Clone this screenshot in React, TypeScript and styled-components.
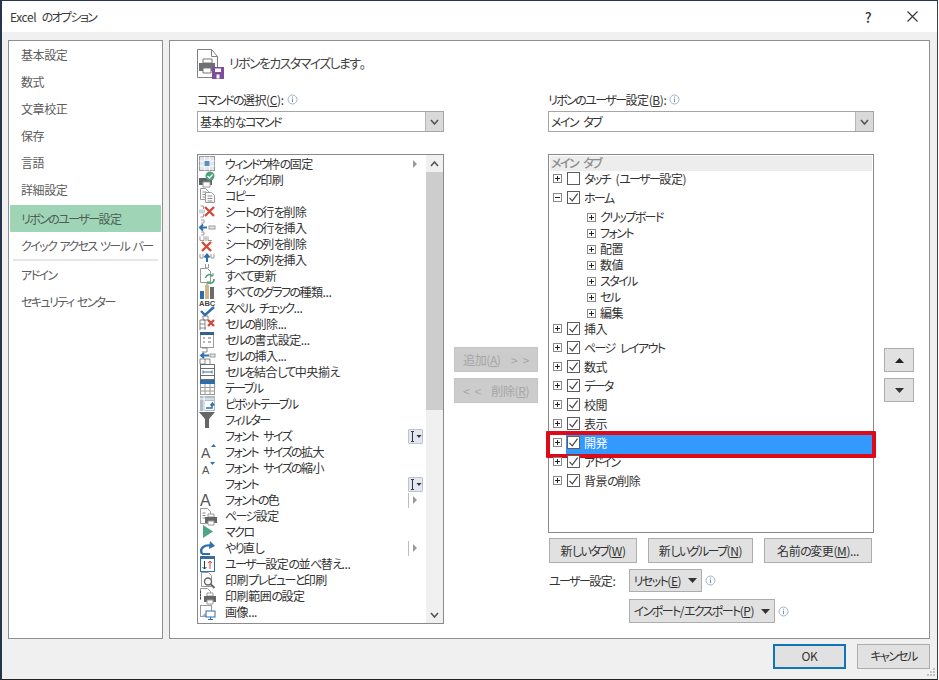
import React from "react";
import styled, { createGlobalStyle } from "styled-components";

const Global = createGlobalStyle`
  html, body { margin: 0; padding: 0; background: #fff; }
  body { font-family: "Noto Sans CJK JP", "Noto Sans", sans-serif; font-size: 12px; line-height: 16px; color: #333; font-feature-settings: "palt"; letter-spacing: -0.4px; word-spacing: 3px; }
  * { box-sizing: border-box; }
`;

const Window = styled.div`
  width: 938px; height: 680px; display: flex; flex-direction: column; position: relative; overflow: hidden;
  background: #f0f0f0; border: 1px solid #26354d; border-left-width: 2px; border-right-color: #3a3f48; border-bottom-color: #222;
`;
const TitleBar = styled.div`
  height: 31px; flex: none; background: #fff; display: flex; align-items: center; padding: 0 3px 0 8px; color: #3a3a3a;
`;
const TitleText = styled.div`flex: 1; font-size: 12px;`;
const TitleBtn = styled.div`
  width: 44px; height: 31px; display: flex; align-items: center; justify-content: center; color: #333; font-size: 14px; font-weight: 500;
`;
const Body = styled.div`flex: 1; display: flex; gap: 6px; padding: 8px 7px 0 6px; min-height: 0;`;
const Nav = styled.nav`
  width: 155px; height: 599px; flex: none; background: #fff; border: 1px solid #8f8f8f; padding: 0 1px 0; word-spacing: 1px;
`;
const NavItem = styled.div<{ $active?: boolean }>`
  height: 27px; display: flex; align-items: center; padding-left: 11px; color: #5c5c5c; font-size: 12px; white-space: pre;
  ${(p) => p.$active ? "background:#9fd4b6; border-radius:1px; margin-top:2px; color:#4d5f55;" : ""}
`;
const NavSep = styled.div`height: 2px; background: #e6e6e6; margin: 0 3px 0 3px;`;
const Panel = styled.main`
  flex: 1; height: 599px; background: #fff; border: 1px solid #8f8f8f; padding: 8px 0 0 27px;
`;
const Heading = styled.div`height: 30px; display: flex; align-items: center; gap: 4px; color: #444; font-size: 13px; margin-bottom: 13px;`;
const HeadingText = styled.span`margin-top: -2px;`;
const Columns = styled.div`display: grid; grid-template-columns: 247px 84px 326px 30px; column-gap: 10px; align-items: start;`;
const Col = styled.div`display: flex; flex-direction: column;`;
const Label = styled.div`height: 16px; display: flex; align-items: center; gap: 3px; margin-bottom: 3px; color: #333; padding-bottom: 1px;`;
const Select = styled.div`
  height: 21px; display: flex; align-items: center; border: 1px solid #a6a6a6; padding-left: 2px; margin-bottom: 22px; color: #333;
`;
const SelectText = styled.div`flex: 1;`;
const SelectBtn = styled.div`
  width: 18px; height: 19px; background: #d9d9d9; border-left: 1px solid #b5b5b5; display: flex; align-items: center; justify-content: center;
`;
const ListBox = styled.div`height: 470px; border: 1px solid #8a8a8a; display: flex; background: #fff;`;
const ListItems = styled.div`flex: 1; padding: 1px 0 0 1px; min-width: 0;`;
const Row = styled.div`height: 16px; display: flex; align-items: center; color: #333; white-space: nowrap;`;
const IconSlot = styled.div`width: 26px; height: 16px; flex: none; display: flex; align-items: flex-start;`;
const IconSvg = styled.svg`overflow: visible; flex: none;`;
const RowText = styled.div`flex: 1;`;
const Trail = styled.div`width: 18px; height: 16px; flex: none; display: flex; align-items: center;`;
const Combo = styled.div`
  width: 15px; height: 15px; border: 1px solid #b9c2d6; background: #e3e7f0; border-radius: 1px; display: flex; align-items: center; justify-content: center; gap: 1px;
`;
const SplitBar = styled.div`width: 1px; height: 15px; background: #bdbdbd; margin-right: 4px;`;
const Tri = styled.div`width: 0; height: 0; border-left: 4px solid #9a9a9a; border-top: 4px solid transparent; border-bottom: 4px solid transparent;`;
const TriRow = styled.div`margin-left: 5px;`;
const ScrollBar = styled.div`width: 17px; flex: none; background: #f0f0f0; display: flex; flex-direction: column;`;
const ScrollBtn = styled.div`height: 17px; flex: none; display: flex; align-items: center; justify-content: center;`;
const Thumb = styled.div`height: 238px; background: #cdcdcd;`;
const ScrollRest = styled.div`flex: 1;`;
const Mid = styled.div`display: flex; flex-direction: column; gap: 6px; padding-top: 255px;`;
const ArrowCol = styled.div`display: flex; flex-direction: column; gap: 6px; padding-top: 256px;`;
const Btn = styled.div<{ $disabled?: boolean; $primary?: boolean; $w?: number; $h?: number }>`
  width: ${(p) => (p.$w ? p.$w + "px" : "100%")}; height: ${(p) => p.$h ?? 25}px; flex: none; display: flex; align-items: center; justify-content: center; gap: 7px; white-space: nowrap;
  background: ${(p) => (p.$disabled ? "#cccccc" : "#e1e1e1")}; color: ${(p) => (p.$disabled ? "#a6a6a6" : "#333")};
  border: ${(p) => (p.$primary ? "2px solid #0f74b8" : p.$disabled ? "1px solid #c4c4c4" : "1px solid #adadad")};
`;
const Tree = styled.div`height: 379px; border: 1px solid #8a8a8a; padding: 1px; background: #fff;`;
const TreeHead = styled.div`height: 15px; line-height: 12px; margin-bottom: -2px; background: #ededed; color: #8c8c8c; display: flex; align-items: center; padding: 0 0 2px 1px; font-weight: 500;`;
const TreeRow = styled.div<{ $selected?: boolean }>`
  height: 19px; display: flex; align-items: center; color: #333; padding-left: 3px; position: relative; white-space: nowrap;
  ${(p) => p.$selected ? `z-index: 1; color: #fff;
    &::before { content: ""; position: absolute; left: 16px; right: 0; top: 2px; bottom: -4px; background: #3399ff; }
    &::after { content: ""; position: absolute; left: -4px; right: -4px; top: -2px; bottom: -6px; border: 4px solid #df0a17; border-radius: 1px; }
  ` : ""}
`;
const Exp = styled.div`
  width: 9px; height: 9px; flex: none; border: 1px solid #8a8a8a; position: relative; background: #fff; z-index: 1;
`;
const ExpH = styled.div`position: absolute; left: 1px; right: 1px; top: 3px; height: 1px; background: #222;`;
const ExpV = styled.div`position: absolute; top: 1px; bottom: 1px; left: 3px; width: 1px; background: #222;`;
const Check = styled.div`
  width: 13px; height: 13px; flex: none; border: 1px solid #5c5c5c; background: #fff; margin: 0 4px 0 5px; display: flex; align-items: center; justify-content: center; position: relative; z-index: 1;
`;
const TreeText = styled.span`position: relative; z-index: 1;`;
const SubGroup = styled.div`margin: 2px 0 -2px;`;
const SubRow = styled.div`height: 16px; display: flex; align-items: center; padding-left: 37px; gap: 4px; color: #333; white-space: nowrap;`;
const BtnRow = styled.div`display: flex; margin: 5px 0 0 1px; gap: 11px;`;
const SettingRow = styled.div`display: flex; align-items: center; margin-top: 6px; height: 23px;`;
const SettingLabel = styled.div`width: 81px; padding-left: 1px; color: #333;`;
const SettingRow2 = styled(SettingRow)`margin-top: 7px; height: 24px;`;
const InfoWrap = styled.div`margin-left: 3px; display: flex;`;
const Footer = styled.footer`height: 41px; flex: none; display: flex; justify-content: flex-end; align-items: center; gap: 11px; padding: 0 7px 5px 0; position: relative;`;
const Grip = styled.div`position: absolute; right: 1px; bottom: 1px; width: 12px; height: 12px; display: flex;`;
const Kana = styled.span`letter-spacing: -1.6px;`;

const Jp = ({ children }: { children: string }) => (
  <>{children.split(/([\u3040-\u30ff]+)/).map((s, i) => (i % 2 ? <Kana key={i}>{s}</Kana> : s))}</>
);

const Info = () => (
  <svg width="11" height="11" viewBox="0 0 11 11"><circle cx="5.5" cy="5.5" r="4.5" fill="none" stroke="#9db5cc" /><path d="M5.5 2.6v1M5.5 4.6v3.6" stroke="#6f93b5" /></svg>
);
const Chevron = ({ up }: { up?: boolean }) => (
  <svg width="9" height="6" viewBox="0 0 9 6"><path d={up ? "M1 5l3.5-4L8 5" : "M1 1l3.5 4L8 1"} fill="none" stroke="#555" strokeWidth="1.6" /></svg>
);
const Down = () => (<svg width="9" height="5" viewBox="0 0 9 5"><path d="M0 0h9L4.5 5z" fill="#333" /></svg>);
const Up = () => (<svg width="9" height="5" viewBox="0 0 9 5"><path d="M0 5h9L4.5 0z" fill="#222" /></svg>);
const CheckMark = () => (<svg width="11" height="11" viewBox="0 0 11 11"><path d="M1.5 5.8l2.8 3L9.6 1.6" fill="none" stroke="#444" strokeWidth="1.2" /></svg>);
const IBeam = () => (<svg width="13" height="13" viewBox="0 0 13 13"><path d="M2 1.5h1.500M5 1.500H3.500v10H5M2 11.500h1.500" fill="none" stroke="#333" /><path d="M7.500 5h5L10 8z" fill="#333" /></svg>);

const G = "#6d6d6d", L = "#9a9a9a", B = "#2f6fb0", R = "#d24a3c", T = "#5b8fc0";
const printer = (x: number, y: number, c = "#5f6468") => (
  <g transform={`translate(${x} ${y})`}><path d="M3 0h6v3H3z" fill="#fff" stroke={L} /><path d="M0 3h12v6H0z" fill={c} /><path d="M3 7h6v4H3z" fill="#fff" stroke={L} /></g>
);
const doc = (x = 2.5, y = .5, w = 9, h = 14) => <path d={`M${x} ${y}h${w - 3}l3 3v${h - 3}h-${w}z`} fill="#fff" stroke={L} />;
const lines = (x: number, y: number, n: number, w = 5) => (
  <path d={Array.from({ length: n }, (_, i) => `M${x} ${y + i * 2.5}h${w}`).join("")} stroke="#8a8a8a" />
);
const X = (x: number, y: number, s = 8) => <path d={`M${x} ${y}l${s} ${s}M${x + s} ${y}l-${s} ${s}`} stroke={R} strokeWidth="2.4" />;

const icons: Record<string, React.ReactNode> = {
  freeze: <><rect x=".5" y=".5" width="15" height="14" fill="#dfe6ee" stroke={L} /><path d="M5.500.5v14M10.500.5v14M.5 5h15M.5 10h15" stroke="#fff" /><rect x="5.500" y="5" width="5" height="5" fill={T} /></>,
  quick: <><rect x="0" y="6" width="13" height="7" fill="#5f6468" /><path d="M4 10h7v5H4z" fill="#fff" stroke={L} /><circle cx="11" cy="4" r="4.500" fill="#4fa078" /><path d="M8.500 4l2 2L13.500 2.500" stroke="#fff" fill="none" strokeWidth="1.200" /></>,
  copy: <>{doc(1.5, .5, 8, 11)}{lines(3.5, 4, 3, 4)}{doc(6.5, 4.5, 9, 10)}{lines(8.5, 8, 3)}</>,
  delrow: <><path d="M1.500 2h3v3M1.500 13h3v-3" fill="none" stroke={L} /><rect x="0" y="5.500" width="6" height="4" fill="#c8d8e6" />{X(6, 3, 9)}</>,
  insrow: <><path d="M2 0h3v3H2M2 12h3v3H2" fill="none" stroke={L} /><path d="M1 7.500h7M4 4.500l-3 3 3 3" stroke={B} strokeWidth="2" fill="none" /><rect x="10" y="6" width="6" height="3" fill="#e8e8e8" stroke={L} /></>,
  delcol: <><path d="M1 .5v4h4v-4M9 .5v4h4M7 0v5" fill="none" stroke={L} />{X(3, 6, 9)}</>,
  inscol: <><path d="M1 2v4h3V2M12 2v4h3V2M6.500 12v4h3v-4" fill="none" stroke={L} /><path d="M8 10V3M5.500 5.500L8 2.500l2.500 3" stroke={B} strokeWidth="2" fill="none" /></>,
  refresh: <>{doc(1.5, .5, 10, 14)}<path d="M6.500 10a4 4 0 0 1 7-2M15 11a4 4 0 0 1-7 3" fill="none" stroke="#4fa078" strokeWidth="1.600" /><path d="M14 5v3h-3M8 17v-3h3" fill="none" stroke="#4fa078" /></>,
  chart: <><rect x="1" y="7" width="4" height="8" fill="#2e6da8" /><rect x="6" y="1" width="4" height="14" fill="#d3b58a" /><rect x="11" y="3" width="4" height="12" fill="#6b6b6b" /></>,
  abc: <><text x="0" y="6" fontSize="7.500" fontWeight="700" fill="#444" letterSpacing="0" fontFamily="Liberation Sans, sans-serif">ABC</text><path d="M2 11l4 4 9-8" fill="none" stroke={B} strokeWidth="2.400" /></>,
  delcell: <><path d="M4 0h5v4H4zM1 4h5v4H1zM1 12h6M1 8v6M6 8v6" fill="none" stroke={G} strokeWidth=".8" />{X(9, 4, 6)}</>,
  format: <><rect x="1.500" y=".5" width="13" height="15" fill="#fff" stroke={L} /><rect x="1" y="0" width="14" height="3" fill="#355f8c" /><path d="M4 6h2M4 10h2M9 6h3M9 10h3" stroke="#666" /></>,
  inscell: <><path d="M3 0h5v4H3M1 11h5v5H1zM6 11h5v5" fill="none" stroke={G} strokeWidth=".8" /><path d="M2 7.500h8M5 5L2 7.500 5 10" stroke={B} strokeWidth="1.800" fill="none" /><rect x="11" y="6" width="5" height="3" fill="#e8e8e8" stroke={L} /></>,
  merge: <><rect x="1.500" y=".5" width="14" height="15" fill="#fff" stroke={G} /><path d="M1.500 4.500h14M1.500 11.500h14" stroke={G} /><path d="M4 8h9M4 6.500v3M13 6.500v3" stroke={B} /></>,
  table: <><rect x="1.500" y=".5" width="14" height="14" fill="#fff" stroke={L} /><rect x="1" y="0" width="15" height="4" fill="#2e6da8" /><path d="M6 4v10M11 4v10M1.500 7.500h14M1.500 11h14" stroke={L} /></>,
  pivot: <><rect x="1" y="0" width="15" height="15" fill="#aebccb" /><rect x="6" y="5" width="9" height="9" fill="#fff" /><path d="M7 12h6V8M11.500 9.500L13.500 7 15 9.500" fill="none" stroke={B} strokeWidth="1.500" /><path d="M1 3h14M5 0v15" stroke="#fff" /></>,
  filter: <path d="M0 0h16L10 7v9H6V7z" fill="#666" />,
  aup: <><text x="2" y="14" fontSize="14" fill="#555" fontFamily="Liberation Sans, sans-serif">A</text><path d="M12 3h5l-2.500-3z" fill={B} /></>,
  adown: <><text x="3" y="14" fontSize="11" fill="#555" fontFamily="Liberation Sans, sans-serif">A</text><path d="M11 2h5l-2.500 3z" fill={B} /></>,
  a: <text x="1" y="14" fontSize="16" fill="#555" fontFamily="Liberation Sans, sans-serif">A</text>,
  page: <>{doc(1.5, .5, 10, 15)}{lines(3.500, 5, 3, 3)}{printer(6, 6, "#666")}</>,
  macro: <path d="M4 1l10 6.500L4 14z" fill="#4ea583" />,
  redo: <><path d="M3 14c-3-6 3-10 10-8" fill="none" stroke={B} strokeWidth="2.400" /><path d="M11 1l5 5-6 3z" fill={B} /><path d="M3 14h8" stroke={B} strokeWidth="2" /></>,
  sort: <><rect x="1.500" y=".5" width="14" height="15" fill="#fff" stroke={B} /><rect x="1" y="0" width="15" height="3" fill="#3a6d9e" /><path d="M5.500 5v8M3.500 11l2 2 2-2" fill="none" stroke="#333" /><path d="M11 13V5M9 7l2-2 2 2" fill="none" stroke={R} /></>,
  preview: <>{doc(2.5, .5, 10, 14)}<circle cx="9" cy="9.500" r="3.500" fill="#fff" stroke="#666" strokeWidth="1.400" /><path d="M11.500 12l4 4" stroke="#666" strokeWidth="2" /></>,
  area: <><path d="M1.500 12V.5h7l3 3V6" fill="#fff" stroke={L} /><path d="M1.500 3v8" stroke="#444" strokeDasharray="2 1" />{printer(5, 5, "#666")}</>,
  picture: <><rect x="1.500" y="1.500" width="11" height="11" fill="#fff" stroke={L} /><path d="M3 12l3-3 3 3z" fill="#9db8cf" /><rect x="7" y="7" width="9" height="6" fill="#fff" stroke={B} /><path d="M11.500 13v2M9 15.500h5" stroke={B} /></>,
};

type Item = { t: string; i?: string; tr?: "arrow" | "combo" | "split" };
const items: Item[] = [
  { t: "ウィンドウ枠の固定", i: "freeze", tr: "arrow" }, { t: "クイック印刷", i: "quick" }, { t: "コピー", i: "copy" },
  { t: "シートの行を削除", i: "delrow" }, { t: "シートの行を挿入", i: "insrow" }, { t: "シートの列を削除", i: "delcol" },
  { t: "シートの列を挿入", i: "inscol" }, { t: "すべて更新", i: "refresh" }, { t: "すべてのグラフの種類...", i: "chart" },
  { t: "スペル チェック...", i: "abc" }, { t: "セルの削除...", i: "delcell" }, { t: "セルの書式設定...", i: "format" },
  { t: "セルの挿入...", i: "inscell" }, { t: "セルを結合して中央揃え", i: "merge" }, { t: "テーブル", i: "table" },
  { t: "ピボットテーブル", i: "pivot" }, { t: "フィルター", i: "filter" }, { t: "フォント サイズ", tr: "combo" },
  { t: "フォント サイズの拡大", i: "aup" }, { t: "フォント サイズの縮小", i: "adown" }, { t: "フォント", tr: "combo" },
  { t: "フォントの色", i: "a", tr: "split" }, { t: "ページ設定", i: "page" }, { t: "マクロ", i: "macro" },
  { t: "やり直し", i: "redo", tr: "split" }, { t: "ユーザー設定の並べ替え...", i: "sort" }, { t: "印刷プレビューと印刷", i: "preview" },
  { t: "印刷範囲の設定", i: "area" }, { t: "画像...", i: "picture" },
];
const navTop = ["基本設定", "数式", "文章校正", "保存", "言語", "詳細設定"];
const tops1 = ["挿入", "ページ レイアウト", "数式", "データ", "校閲", "表示"];
const subs = ["クリップボード", "フォント", "配置", "数値", "スタイル", "セル", "編集"];

const Expander = ({ minus }: { minus?: boolean }) => (<Exp><ExpH />{!minus && <ExpV />}</Exp>);
const CheckBox = ({ on = true }: { on?: boolean }) => <Check>{on && <CheckMark />}</Check>;

const Trailing = ({ kind }: { kind?: Item["tr"] }) => (
  <Trail>
    {kind === "arrow" && <TriRow><Tri /></TriRow>}
    {kind === "combo" && <Combo><IBeam /></Combo>}
    {kind === "split" && <><SplitBar /><Tri /></>}
  </Trail>
);

export default function App() {
  return (
    <Window>
      <Global />
      <TitleBar>
        <TitleText>Excel <Jp>のオプション</Jp></TitleText>
        <TitleBtn>?</TitleBtn>
        <TitleBtn><svg width="11" height="11" viewBox="0 0 11 11"><path d="M.5.5l10 10M10.500.5l-10 10" stroke="#333" strokeWidth="1.100" /></svg></TitleBtn>
      </TitleBar>
      <Body>
        <Nav>
          {navTop.map((t) => <NavItem key={t}>{t}</NavItem>)}
          <NavItem $active><span><Jp>リボンのユーザー設定</Jp></span></NavItem>
          <NavItem><span><Jp>クイック アクセス ツール バー</Jp></span></NavItem>
          <NavSep />
          <NavItem><span><Jp>アドイン</Jp></span></NavItem>
          <NavItem><span><Jp>セキュリティ センター</Jp></span></NavItem>
        </Nav>
        <Panel>
          <Heading>
            <svg width="28" height="30" viewBox="0 0 28 30">
              <path d="M.5.5h14l6 7v21H.5z" fill="#fff" stroke="#808080" /><path d="M14.500.5v7h6" fill="none" stroke="#808080" />
              <path d="M6 10h9v4H6z" fill="#fff" stroke="#777" /><rect x="2" y="14" width="16" height="8" fill="#6d7175" /><path d="M6 19h8v5H6z" fill="#fff" stroke="#777" />
              <rect x="15" y="18" width="12" height="12" fill="#7d4e9c" /><rect x="18" y="19.500" width="6" height="3.500" fill="#fff" /><rect x="19.500" y="25.500" width="3" height="4" fill="#fff" />
            </svg>
            <HeadingText><Jp>リボンをカスタマイズします。</Jp></HeadingText>
          </Heading>
          <Columns>
            <Col>
              <Label><span><Jp>コマンドの選択(</Jp><u>C</u>):</span><Info /></Label>
              <Select><SelectText><Jp>基本的なコマンド</Jp></SelectText><SelectBtn><Chevron /></SelectBtn></Select>
              <ListBox>
                <ListItems>
                  {items.map((it) => (
                    <Row key={it.t}>
                      <IconSlot>{it.i && <IconSvg width="18" height="16" viewBox="0 0 18 16">{icons[it.i]}</IconSvg>}</IconSlot>
                      <RowText><Jp>{it.t}</Jp></RowText>
                      <Trailing kind={it.tr} />
                    </Row>
                  ))}
                </ListItems>
                <ScrollBar>
                  <ScrollBtn><Chevron up /></ScrollBtn>
                  <Thumb />
                  <ScrollRest />
                  <ScrollBtn><Chevron /></ScrollBtn>
                </ScrollBar>
              </ListBox>
            </Col>
            <Mid>
              <Btn $disabled><span>追加(<u>A</u>) &nbsp;&gt; &gt;</span></Btn>
              <Btn $disabled><span>&lt; &lt; &nbsp;削除(<u>R</u>)</span></Btn>
            </Mid>
            <Col>
              <Label><span><Jp>リボンのユーザー設定(</Jp><u>B</u>):</span><Info /></Label>
              <Select><SelectText><Jp>メイン タブ</Jp></SelectText><SelectBtn><Chevron /></SelectBtn></Select>
              <Tree>
                <TreeHead><span><Jp>メイン タブ</Jp></span></TreeHead>
                <TreeRow><Expander /><CheckBox on={false} /><TreeText><Jp>タッチ (ユーザー設定)</Jp></TreeText></TreeRow>
                <TreeRow><Expander minus /><CheckBox /><TreeText><Jp>ホーム</Jp></TreeText></TreeRow>
                <SubGroup>
                  {subs.map((s) => <SubRow key={s}><Expander /><span><Jp>{s}</Jp></span></SubRow>)}
                </SubGroup>
                {tops1.map((t) => <TreeRow key={t}><Expander /><CheckBox /><TreeText><Jp>{t}</Jp></TreeText></TreeRow>)}
                <TreeRow $selected><Expander /><CheckBox /><TreeText>開発</TreeText></TreeRow>
                <TreeRow><Expander /><CheckBox /><TreeText><Jp>アドイン</Jp></TreeText></TreeRow>
                <TreeRow><Expander /><CheckBox /><TreeText><Jp>背景の削除</Jp></TreeText></TreeRow>
              </Tree>
              <BtnRow>
                <Btn $w={88}><span><Jp>新しいタブ(</Jp><u>W</u>)</span></Btn>
                <Btn $w={105}><span><Jp>新しいグループ(</Jp><u>N</u>)</span></Btn>
                <Btn $w={108}><span><Jp>名前の変更(</Jp><u>M</u>)...</span></Btn>
              </BtnRow>
              <SettingRow>
                <SettingLabel><Jp>ユーザー設定:</Jp></SettingLabel>
                <Btn $w={73} $h={23}><span><Jp>リセット(</Jp><u>E</u>)</span><Down /></Btn>
                <InfoWrap><Info /></InfoWrap>
              </SettingRow>
              <SettingRow2>
                <SettingLabel />
                <Btn $w={146} $h={24}><span><Jp>インポート/エクスポート(</Jp><u>P</u>)</span><Down /></Btn>
                <InfoWrap><Info /></InfoWrap>
              </SettingRow2>
            </Col>
            <ArrowCol>
              <Btn $h={24}><Up /></Btn>
              <Btn $h={24}><Down /></Btn>
            </ArrowCol>
          </Columns>
        </Panel>
      </Body>
      <Footer>
        <Btn $w={73} $primary>OK</Btn>
        <Btn $w={73}><span><Jp>キャンセル</Jp></span></Btn>
        <Grip><svg width="12" height="12" viewBox="0 0 12 12"><path d="M9 2h2v2H9zM6 5h2v2H6zM9 5h2v2H9zM3 8h2v2H3zM6 8h2v2H6zM9 8h2v2H9z" fill="#c2c2c2" /></svg></Grip>
      </Footer>
    </Window>
  );
}
